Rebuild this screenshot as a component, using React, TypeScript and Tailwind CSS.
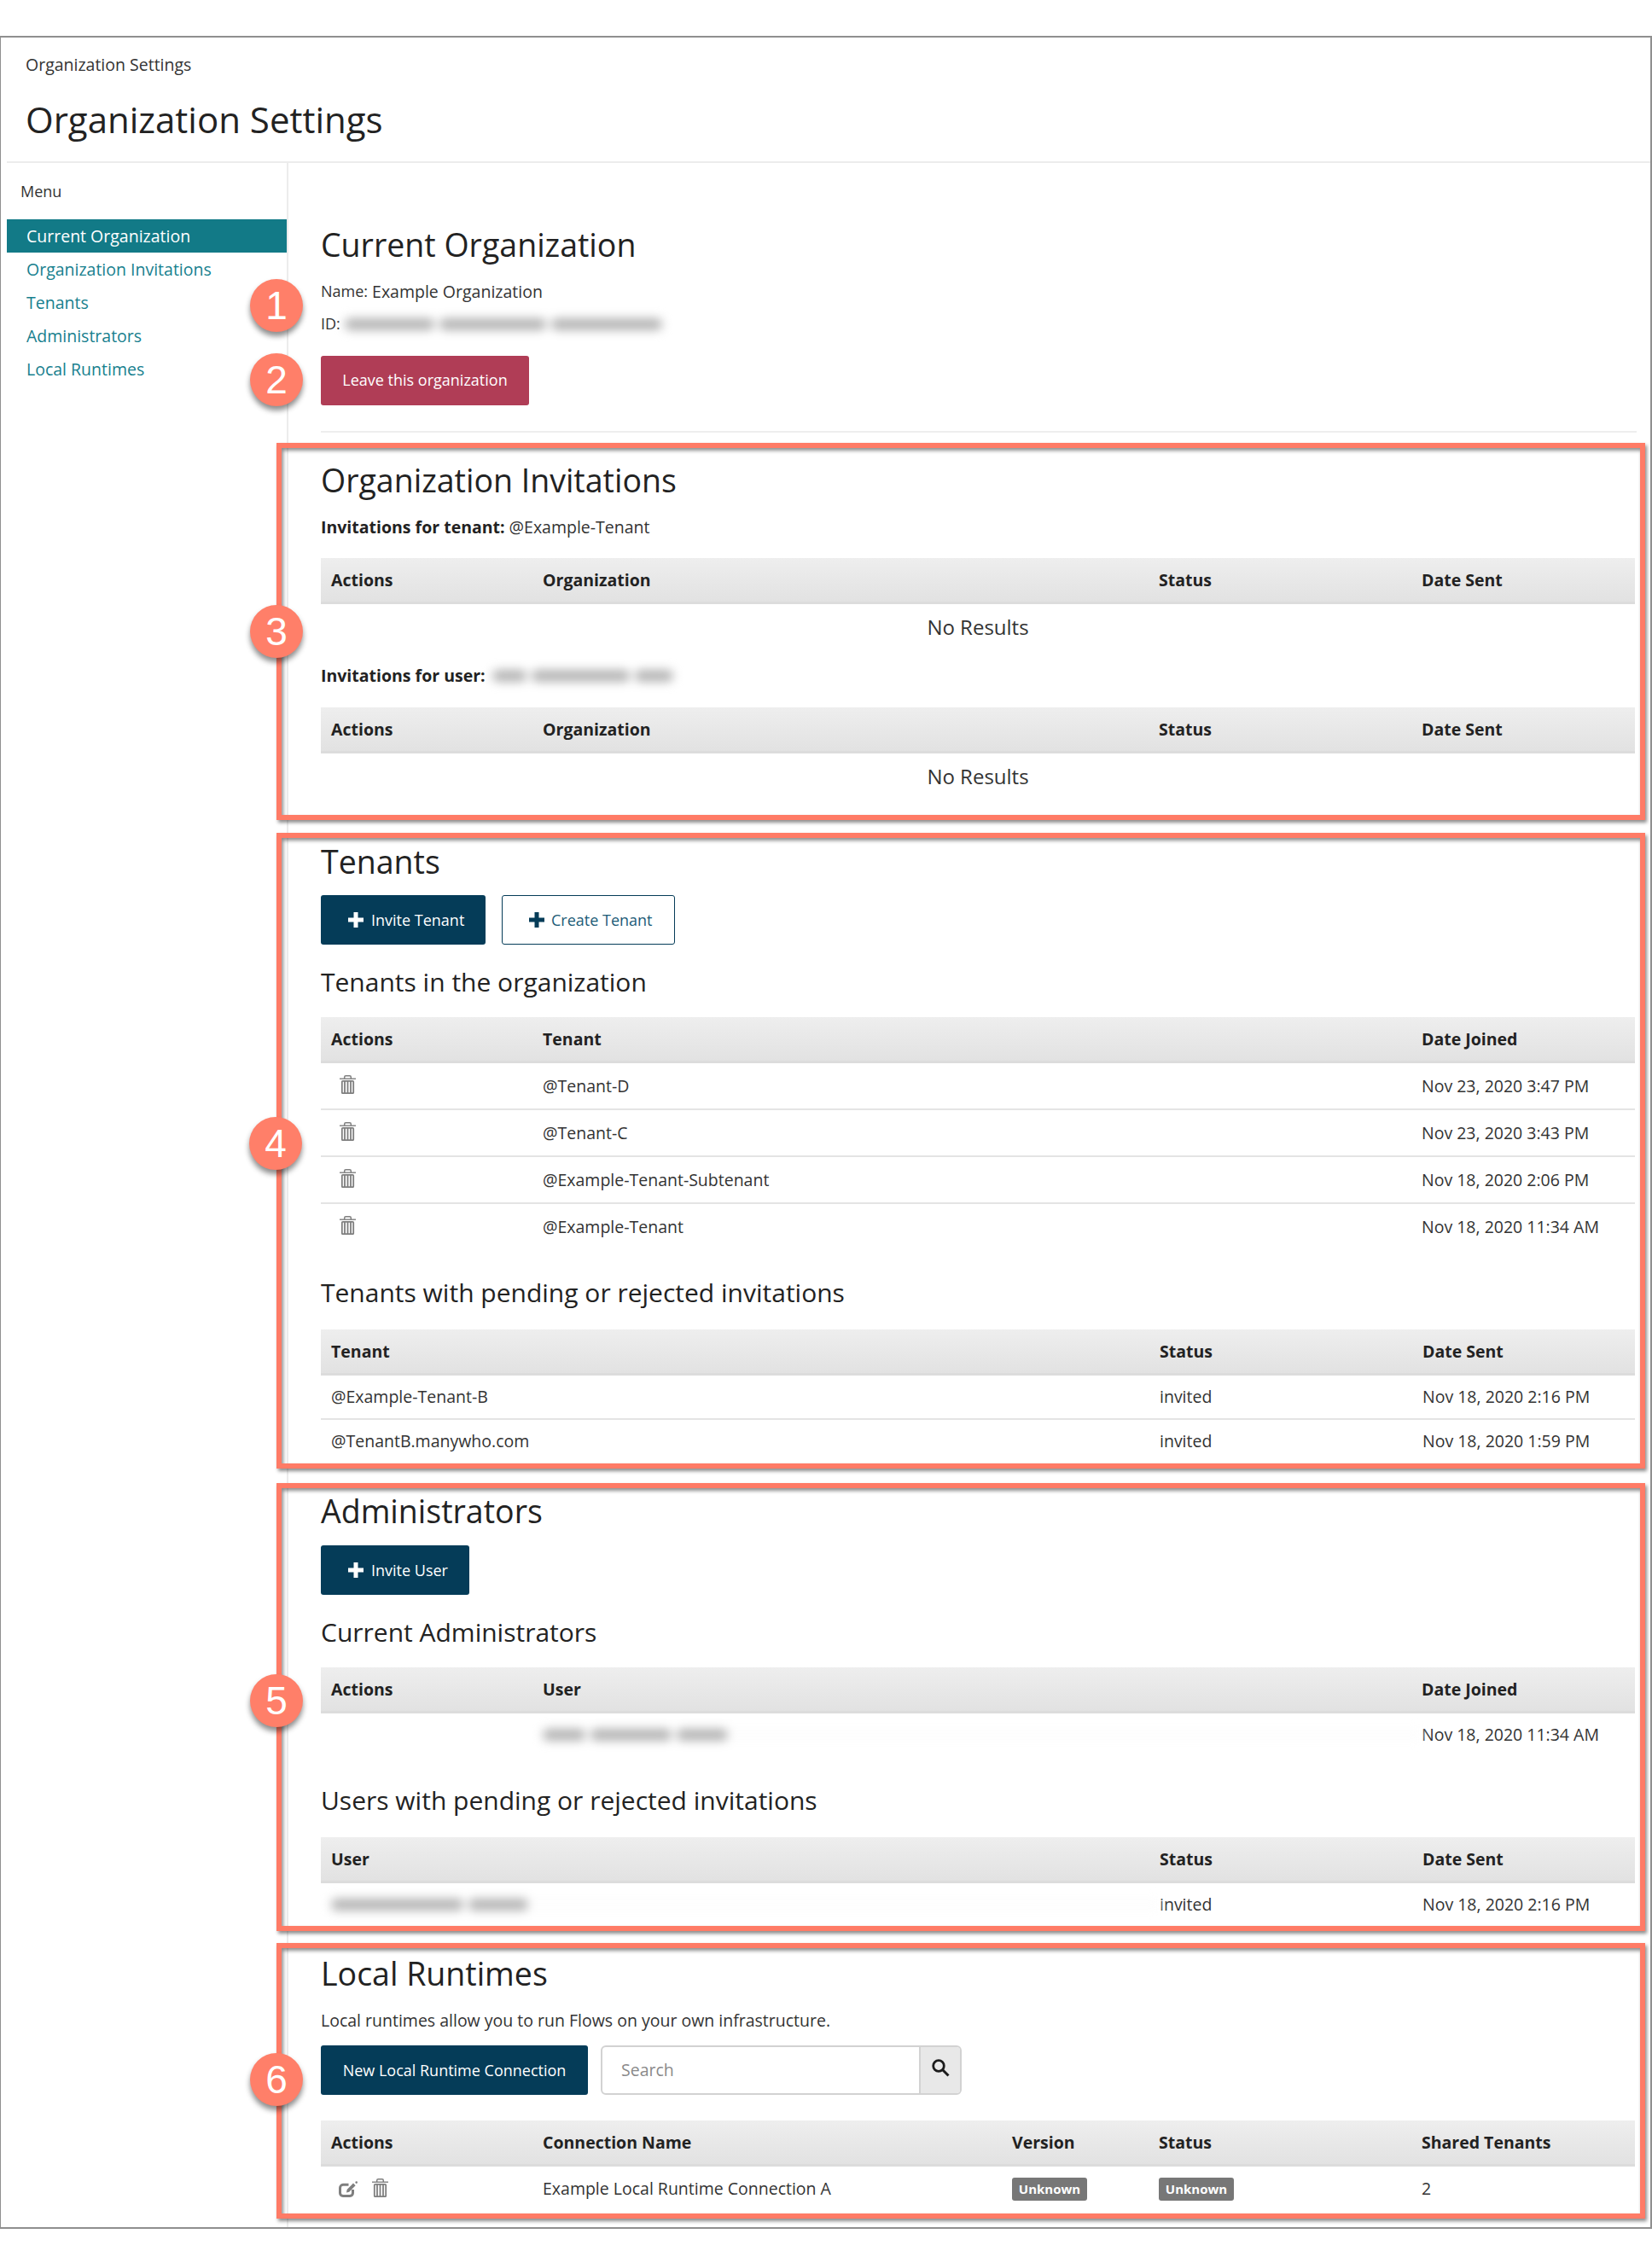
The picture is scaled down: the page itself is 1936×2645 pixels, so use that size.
import type { ReactNode } from 'react'

const NO_RESULTS = 'flex h-[54px] items-center justify-center text-[24px] text-[#333]'
const H2 = 'flex h-14 items-center text-[37.5px] text-[#222]'
const H3 = 'flex h-11 items-center text-[30px] text-[#222]'
const LINE = 'flex h-[38px] items-center text-[19.5px] text-[#333]'

function PlusIcon({ className }: { className: string }) {
  return (
    <svg viewBox="0 0 18 18" className={className} fill="currentColor">
      <path d="M6.5 0h5v6.5H18v5h-6.500V18h-5v-6.500H0v-5h6.500z" />
    </svg>
  )
}

function TrashIcon() {
  return (
    <svg viewBox="0 0 19 22" className="h-[22px] w-[19px] text-[#7f7f7f]" fill="none" stroke="currentColor">
      <path d="M5.700 4V2.300Q5.700 .8 7.200 .8h4.600q1.500 0 1.500 1.500V4" strokeWidth="1.500" />
      <path d="M0 4.200h19" strokeWidth="1.400" />
      <rect x="2.800" y="6.800" width="13.400" height="14.400" rx="1" strokeWidth="1.800" />
      <path d="M6 7v14M9.500 7v14M13 7v14" strokeWidth="1.800" />
    </svg>
  )
}

function EditIcon() {
  return (
    <svg viewBox="0 0 22 19" className="h-[19px] w-[22px] text-[#7f7f7f]" fill="none" stroke="currentColor">
      <path d="M11.500 4.300H5A3.700 3.700 0 0 0 1.500 8v6A3.700 3.700 0 0 0 5 17.500h8a3.700 3.700 0 0 0 3.500-3.500V10" strokeWidth="3" />
      <path d="M9 13.500 9.600 10 17 2.600l2.600 2.600-7.400 7.500z" fill="currentColor" stroke="none" />
      <circle cx="20.700" cy="1.600" r="1.300" fill="currentColor" stroke="none" />
    </svg>
  )
}

function SearchIcon() {
  return (
    <svg viewBox="0 0 21 21" className="h-[21px] w-[21px] text-[#1c1c1c]" fill="none" stroke="currentColor">
      <circle cx="8" cy="8" r="6.300" strokeWidth="2.800" />
      <path d="m12.500 12.500 7 7" strokeWidth="3" />
    </svg>
  )
}

// stand-in for the redacted ids and emails in the screenshot
function Blurred({ segments }: { segments: string[] }) {
  return (
    <div className="flex gap-[6px] bg-[#fdfdfd] blur-[6px]">
      {segments.map((w, i) => (
        <div key={i} className={`h-[14px] rounded-full bg-[#b4b4b4] ${w}`} />
      ))}
    </div>
  )
}

function Badge({ children }: { children: ReactNode }) {
  return (
    <span className="flex h-[27px] w-[88px] items-center justify-center rounded-[3px] bg-[#777] text-[15px] font-bold text-white">
      {children}
    </span>
  )
}

function HeaderCell({ children }: { children: ReactNode }) {
  return <div className="text-[19.5px] font-bold text-[#222]">{children}</div>
}

function Table({
  grid,
  columns,
  rows,
  rowClass,
}: {
  grid: string
  columns: string[]
  rows?: ReactNode[][]
  rowClass?: string
}) {
  return (
    <div>
      <div className={`grid h-[54px] items-center border-b-[3px] border-[#dcdcdc] bg-gradient-to-b from-[#eeeeee] to-[#e2e2e2] pl-[12px] ${grid}`}>
        {columns.map((c) => (
          <HeaderCell key={c}>{c}</HeaderCell>
        ))}
      </div>
      {rows?.map((row, i) => (
        <div
          key={i}
          className={`grid items-center border-b-2 pl-[12px] text-[19.5px] text-[#333] ${grid} ${rowClass} ${i < rows.length - 1 ? 'border-[#e4e4e4]' : 'border-transparent'}`}
        >
          {row.map((cell, j) => (
            <div key={j}>{cell}</div>
          ))}
        </div>
      ))}
    </div>
  )
}

function PrimaryButton({ children, className }: { children: ReactNode; className: string }) {
  return (
    <button className={`flex h-[58px] items-center rounded-[3px] bg-[#053c58] text-[18px] text-white ${className}`}>
      {children}
    </button>
  )
}

function Trash() {
  return (
    <div className="-mt-[3px] pl-[10px]">
      <TrashIcon />
    </div>
  )
}

function Callout({ n, className }: { n: number; className: string }) {
  return (
    <div
      className={`absolute flex h-[62px] w-[62px] items-center justify-center rounded-full bg-[#ff7f69] font-['Liberation_Sans',sans-serif] text-[46px] text-white shadow-[0_5px_6px_rgba(0,0,0,0.45)] ${className}`}
    >
      {n}
    </div>
  )
}

function Highlight({ className }: { className: string }) {
  return (
    <div
      className={`pointer-events-none absolute left-[324px] w-[1604px] border-[6px] border-[#ff7b66] shadow-[2px_3px_4px_rgba(0,0,0,0.45),inset_2px_3px_4px_rgba(0,0,0,0.45)] ${className}`}
    />
  )
}

const MENU = ['Organization Invitations', 'Tenants', 'Administrators', 'Local Runtimes']

export default function App() {
  return (
    <div className="relative h-[2645px] w-[1936px] bg-white pt-[42px] font-['Open_Sans',sans-serif]">
      <div className="h-[2570px] w-[1936px] border-2 border-[#8f8f8f] border-l-[1.5px] pl-[6.5px]">
        <div className="h-[147px] border-b-2 border-[#ececec]">
          <div className="flex h-[63px] items-center pl-[22.5px] text-[19.5px] text-[#333]">Organization Settings</div>
          <div className="mt-[4px] flex h-[56px] items-center pl-[22.5px] text-[42px] text-[#222]">Organization Settings</div>
        </div>

        <div className="flex h-[2419px]">
          <div className="w-[330.5px] shrink-0 border-r-2 border-[#ececec]">
            <div className="flex h-[66px] items-center pl-[16.5px] text-[18px] text-[#333]">Menu</div>
            <div className="flex h-[39px] items-center bg-[#127a87] pl-[23.5px] text-[19.5px] text-white">Current Organization</div>
            {MENU.map((m) => (
              <div key={m} className="flex h-[39px] items-center pl-[23.5px] text-[19.5px] text-[#17808e]">
                {m}
              </div>
            ))}
          </div>

          <div className="w-[1580px] pl-[38px]">
            <div className={`${H2} mt-[68px]`}>Current Organization</div>
            <div className="mt-[8px] flex h-[37px] items-center gap-[5px] text-[19.5px] text-[#333]">
              <span className="text-[18px]">Name:</span> Example Organization
            </div>
            <div className="mt-[1px] flex h-[37px] items-center gap-[5px] text-[18px] text-[#333]">
              ID:
              <Blurred segments={['w-[105px]', 'w-[125px]', 'w-[130px]']} />
            </div>
            <button className="mt-[19px] h-[58px] w-[244px] rounded-[3px] bg-[#b03d56] pb-[2px] text-[18px] text-white">Leave this organization</button>
            <div className="mt-[30px] h-[2px] w-[1542px] bg-[#eeeeee]" />

            <div className="w-[1540px]">
              <div className={`${H2} mt-[28px]`}>Organization Invitations</div>
              <div className={`${LINE} mt-[8px] gap-[5px]`}>
                <span className="font-bold text-[#222]">Invitations for tenant:</span> @Example-Tenant
              </div>
              <div className="mt-[17px]">
                <Table grid="grid-cols-[248px_722px_308px_1fr]" columns={['Actions', 'Organization', 'Status', 'Date Sent']} />
              </div>
              <div className={NO_RESULTS}>No Results</div>
              <div className={`${LINE} mt-[11px] gap-[8px]`}>
                <span className="font-bold text-[#222]">Invitations for user:</span>
                <Blurred segments={['w-[40px]', 'w-[115px]', 'w-[45px]']} />
              </div>
              <div className="mt-[18px]">
                <Table grid="grid-cols-[248px_722px_308px_1fr]" columns={['Actions', 'Organization', 'Status', 'Date Sent']} />
              </div>
              <div className={NO_RESULTS}>No Results</div>

              <div className={`${H2} mt-[45px]`}>Tenants</div>
              <div className="mt-[11px] flex gap-[19px]">
                <PrimaryButton className="w-[193px] gap-[9px] pl-[32px]">
                  <PlusIcon className="h-[18px] w-[18px]" />
                  Invite Tenant
                </PrimaryButton>
                <button className="flex h-[58px] w-[203px] items-center gap-[8px] rounded-[3px] border-[1.5px] border-[#053c58] pl-[31px] text-[18px] text-[#1d5c78]">
                  <PlusIcon className="h-[18px] w-[18px] text-[#053c58]" />
                  Create Tenant
                </button>
              </div>
              <div className={`${H3} mt-[21px]`}>Tenants in the organization</div>
              <div className="mt-[20px]">
                <Table
                  grid="grid-cols-[248px_1030px_1fr]"
                  rowClass="h-[55px]"
                  columns={['Actions', 'Tenant', 'Date Joined']}
                  rows={[
                    [<Trash />, '@Tenant-D', 'Nov 23, 2020 3:47 PM'],
                    [<Trash />, '@Tenant-C', 'Nov 23, 2020 3:43 PM'],
                    [<Trash />, '@Example-Tenant-Subtenant', 'Nov 18, 2020 2:06 PM'],
                    [<Trash />, '@Example-Tenant', 'Nov 18, 2020 11:34 AM'],
                  ]}
                />
              </div>
              <div className={`${H3} mt-[26px]`}>Tenants with pending or rejected invitations</div>
              <div className="mt-[22px]">
                <Table
                  grid="grid-cols-[971px_308px_1fr]"
                  rowClass="h-[51.5px]"
                  columns={['Tenant', 'Status', 'Date Sent']}
                  rows={[
                    ['@Example-Tenant-B', 'invited', 'Nov 18, 2020 2:16 PM'],
                    ['@TenantB.manywho.com', 'invited', 'Nov 18, 2020 1:59 PM'],
                  ]}
                />
              </div>

              <div className={`${H2} mt-[28px]`}>Administrators</div>
              <div className="mt-[12px]">
                <PrimaryButton className="w-[174px] gap-[9px] pl-[32px]">
                  <PlusIcon className="h-[18px] w-[18px]" />
                  Invite User
                </PrimaryButton>
              </div>
              <div className={`${H3} mt-[21px]`}>Current Administrators</div>
              <div className="mt-[20px]">
                <Table
                  grid="grid-cols-[248px_1030px_1fr]"
                  rowClass="h-[52px]"
                  columns={['Actions', 'User', 'Date Joined']}
                  rows={[['', <Blurred segments={['w-[50px]', 'w-[95px]', 'w-[60px]']} />, 'Nov 18, 2020 11:34 AM']]}
                />
              </div>
              <div className={`${H3} mt-[27px]`}>Users with pending or rejected invitations</div>
              <div className="mt-[22px]">
                <Table
                  grid="grid-cols-[971px_308px_1fr]"
                  rowClass="h-[52px]"
                  columns={['User', 'Status', 'Date Sent']}
                  rows={[[<Blurred segments={['w-[155px]', 'w-[70px]']} />, 'invited', 'Nov 18, 2020 2:16 PM']]}
                />
              </div>

              <div className={`${H2} mt-[26px]`}>Local Runtimes</div>
              <div className={`${LINE} mt-[8px]`}>Local runtimes allow you to run Flows on your own infrastructure.</div>
              <div className="mt-[10px] flex gap-[15px]">
                <PrimaryButton className="w-[313px] justify-center">New Local Runtime Connection</PrimaryButton>
                <div className="flex h-[58px] w-[423px] overflow-hidden rounded-[6px] border-2 border-[#d2d2d2]">
                  <div className="flex flex-1 items-center pl-[22px] text-[19.5px] text-[#8a8a8a]">Search</div>
                  <div className="flex w-[48px] items-start justify-center border-l-2 border-[#d2d2d2] bg-[#e8e8e8] pt-[14px]">
                    <SearchIcon />
                  </div>
                </div>
              </div>
              <div className="mt-[30px]">
                <Table
                  grid="grid-cols-[248px_550px_172px_308px_1fr]"
                  rowClass="h-[54px]"
                  columns={['Actions', 'Connection Name', 'Version', 'Status', 'Shared Tenants']}
                  rows={[
                    [
                      <div className="-mt-[3px] flex items-end gap-[17px] pl-[9px]">
                        <EditIcon />
                        <TrashIcon />
                      </div>,
                      'Example Local Runtime Connection A',
                      <Badge>Unknown</Badge>,
                      <Badge>Unknown</Badge>,
                      '2',
                    ],
                  ]}
                />
              </div>
            </div>
          </div>
        </div>
      </div>

      <Highlight className="top-[519px] h-[442px]" />
      <Highlight className="top-[976px] h-[745px]" />
      <Highlight className="top-[1738px] h-[525px]" />
      <Highlight className="top-[2277px] h-[323px]" />

      <Callout n={1} className="left-[293px] top-[327px]" />
      <Callout n={2} className="left-[293px] top-[414px]" />
      <Callout n={3} className="left-[293px] top-[709px]" />
      <Callout n={4} className="left-[292px] top-[1309px]" />
      <Callout n={5} className="left-[293px] top-[1962px]" />
      <Callout n={6} className="left-[293px] top-[2406px]" />
    </div>
  )
}
